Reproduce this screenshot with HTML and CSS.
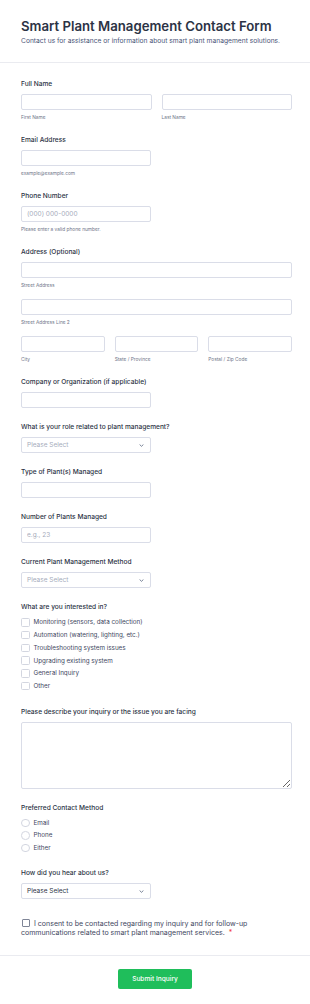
FILE: index.html
```html
<!DOCTYPE html>
<html lang="en">
<head>
    <meta charset="UTF-8">
    <meta name="viewport" content="width=device-width, initial-scale=1.0">
    <title>Smart Plant Management Contact Form</title>
    <link rel="stylesheet" href="styles.css">
</head>
<body>

<div class="form">
  <div class="form-header">
    <h1 class="form-title">Smart Plant Management Contact Form</h1>
    <p class="form-desc">Contact us for assistance or information about smart plant management solutions.</p>
  </div>

  <div class="form-body">

    <div class="field">
      <p class="field-label">Full Name</p>
      <div class="cols cols-2">
        <div>
          <input class="input" type="text">
          <p class="sublabel">First Name</p>
        </div>
        <div>
          <input class="input" type="text">
          <p class="sublabel">Last Name</p>
        </div>
      </div>
    </div>

    <div class="field">
      <p class="field-label">Email Address</p>
      <input class="input half" type="text">
      <p class="sublabel">example@example.com</p>
    </div>

    <div class="field">
      <p class="field-label">Phone Number</p>
      <input class="input half" type="text" placeholder="(000) 000-0000">
      <p class="sublabel">Please enter a valid phone number.</p>
    </div>

    <div class="field">
      <p class="field-label">Address (Optional)</p>
      <div class="addr-line">
        <input class="input" type="text">
        <p class="sublabel">Street Address</p>
      </div>
      <div class="addr-line">
        <input class="input" type="text">
        <p class="sublabel">Street Address Line 2</p>
      </div>
      <div class="cols cols-3">
        <div>
          <input class="input" type="text">
          <p class="sublabel">City</p>
        </div>
        <div>
          <input class="input" type="text">
          <p class="sublabel">State / Province</p>
        </div>
        <div>
          <input class="input" type="text">
          <p class="sublabel">Postal / Zip Code</p>
        </div>
      </div>
    </div>

    <div class="field">
      <p class="field-label">Company or Organization (if applicable)</p>
      <input class="input half" type="text">
    </div>

    <div class="field">
      <p class="field-label">What is your role related to plant management?</p>
      <div class="select half">
        <span class="select-text">Please Select</span>
        <svg class="chevron" width="5" height="3" viewBox="0 0 5 3"><path d="M0.6 0.5 L2.5 2.3 L4.4 0.5" fill="none" stroke="#57647e" stroke-width="0.8"/></svg>
      </div>
    </div>

    <div class="field">
      <p class="field-label">Type of Plant(s) Managed</p>
      <input class="input half" type="text">
    </div>

    <div class="field">
      <p class="field-label">Number of Plants Managed</p>
      <input class="input half" type="text" placeholder="e.g., 23">
    </div>

    <div class="field">
      <p class="field-label">Current Plant Management Method</p>
      <div class="select half">
        <span class="select-text">Please Select</span>
        <svg class="chevron" width="5" height="3" viewBox="0 0 5 3"><path d="M0.6 0.5 L2.5 2.3 L4.4 0.5" fill="none" stroke="#57647e" stroke-width="0.8"/></svg>
      </div>
    </div>

    <div class="field">
      <p class="field-label">What are you interested in?</p>
      <ul class="options">
        <li class="option"><span class="box"></span>Monitoring (sensors, data collection)</li>
        <li class="option"><span class="box"></span>Automation (watering, lighting, etc.)</li>
        <li class="option"><span class="box"></span>Troubleshooting system issues</li>
        <li class="option"><span class="box"></span>Upgrading existing system</li>
        <li class="option"><span class="box"></span>General Inquiry</li>
        <li class="option"><span class="box"></span>Other</li>
      </ul>
    </div>

    <div class="field">
      <p class="field-label">Please describe your inquiry or the issue you are facing</p>
      <textarea class="textarea"></textarea>
    </div>

    <div class="field">
      <p class="field-label">Preferred Contact Method</p>
      <ul class="options radios">
        <li class="option"><span class="box round"></span>Email</li>
        <li class="option"><span class="box round"></span>Phone</li>
        <li class="option"><span class="box round"></span>Either</li>
      </ul>
    </div>

    <div class="field">
      <p class="field-label">How did you hear about us?</p>
      <div class="select half">
        <span class="select-text dark">Please Select</span>
        <svg class="chevron" width="5" height="3" viewBox="0 0 5 3"><path d="M0.6 0.5 L2.5 2.3 L4.4 0.5" fill="none" stroke="#57647e" stroke-width="0.8"/></svg>
      </div>
    </div>

    <div class="field consent">
      <p class="consent-text"><span class="box consent-box"></span>I consent to be contacted regarding my inquiry and for follow-up<br><span>communications related to smart plant management services.</span><span class="req">*</span></p>
    </div>

  </div>

  <div class="form-footer">
    <button class="submit" type="button">Submit Inquiry</button>
  </div>
</div>

</body>
</html>
```

FILE: styles.css
```css
/*RESETS*/

* {
    box-sizing: border-box;
}

body {
    margin: 0;
    background: #ffffff;
    font-family: "Inter", "Liberation Sans", sans-serif;
    color: #2c3345;
}

p, h1, ul {
    margin: 0;
    padding: 0;
}

/*FORM*/

.form-header {
    padding: 17px 21px 16px;
    border-bottom: 1px solid #eaebf0;
}

.form-title {
    font-size: 13.2px;
    line-height: 18px;
    font-weight: 600;
    color: #2c3345;
}

.form-desc {
    margin-top: 1px;
    font-size: 6.7px;
    line-height: 10px;
    color: #4a5578;
}

.form-body {
    padding: 16px 18px 18px 21px;
}

.field {
    margin-bottom: 14px;
}

.field-label {
    font-size: 6.6px;
    line-height: 10px;
    font-weight: 500;
    margin-bottom: 5px;
}

.input,
.select {
    display: block;
    width: 100%;
    height: 16px;
    margin: 0;
    padding: 0 5px;
    border: 1px solid #dadde8;
    border-radius: 2px;
    background: #fff;
    font-family: inherit;
    font-size: 6.5px;
    color: #2c3345;
    outline: none;
}

.input::placeholder {
    color: #a6abbb;
}

.half {
    width: 130px;
}

.sublabel {
    margin-top: 3px;
    font-size: 4.8px;
    line-height: 8px;
    color: #6f7689;
}

.addr-line {
    margin-bottom: 10px;
}

.cols {
    display: grid;
    column-gap: 10px;
}

.cols-2 {
    grid-template-columns: 1fr 1fr;
}

.cols-3 {
    grid-template-columns: 1fr 1fr 1fr;
}

.select {
    display: flex;
    align-items: center;
    justify-content: space-between;
    padding: 0 6px 0 5px;
}

.select-text {
    color: #a6abbb;
}

.select-text.dark {
    color: #2c3345;
}

.chevron {
    display: block;
}

.options {
    list-style: none;
    margin-top: -1px;
}

.option {
    display: flex;
    align-items: center;
    height: 12.75px;
    font-size: 6.3px;
    color: #3e4660;
}

.radios .option {
    height: 12.5px;
}

.box {
    display: inline-block;
    flex: none;
    width: 8.5px;
    height: 8.5px;
    margin-right: 4px;
    border: 1px solid #d3d6e0;
    border-radius: 1.5px;
    background: #fff;
}

.box.round {
    border-radius: 50%;
}

.textarea {
    display: block;
    width: 100%;
    height: 67px;
    margin: 0;
    border: 1px solid #dadde8;
    border-radius: 2px;
    font-family: inherit;
    resize: vertical;
    outline: none;
}

.consent {
    margin-top: 20px;
    margin-bottom: 0;
}

.consent-text {
    font-size: 7px;
    line-height: 8.5px;
    color: #3e4660;
}

.consent-box {
    width: 8px;
    height: 8px;
    margin: 0 4px -1px 1px;
    border-color: #7f8597;
    border-radius: 1px;
}

.req {
    margin-left: 4px;
    color: #f23a3c;
}

.form-footer {
    padding: 9px 0 17px;
    border-top: 1px solid #eaebf0;
    text-align: center;
}

.submit {
    width: 74px;
    height: 20px;
    border: none;
    border-radius: 2px;
    background: #1fbe5b;
    color: #ffffff;
    font-family: inherit;
    font-size: 6.6px;
    font-weight: 500;
}
```
